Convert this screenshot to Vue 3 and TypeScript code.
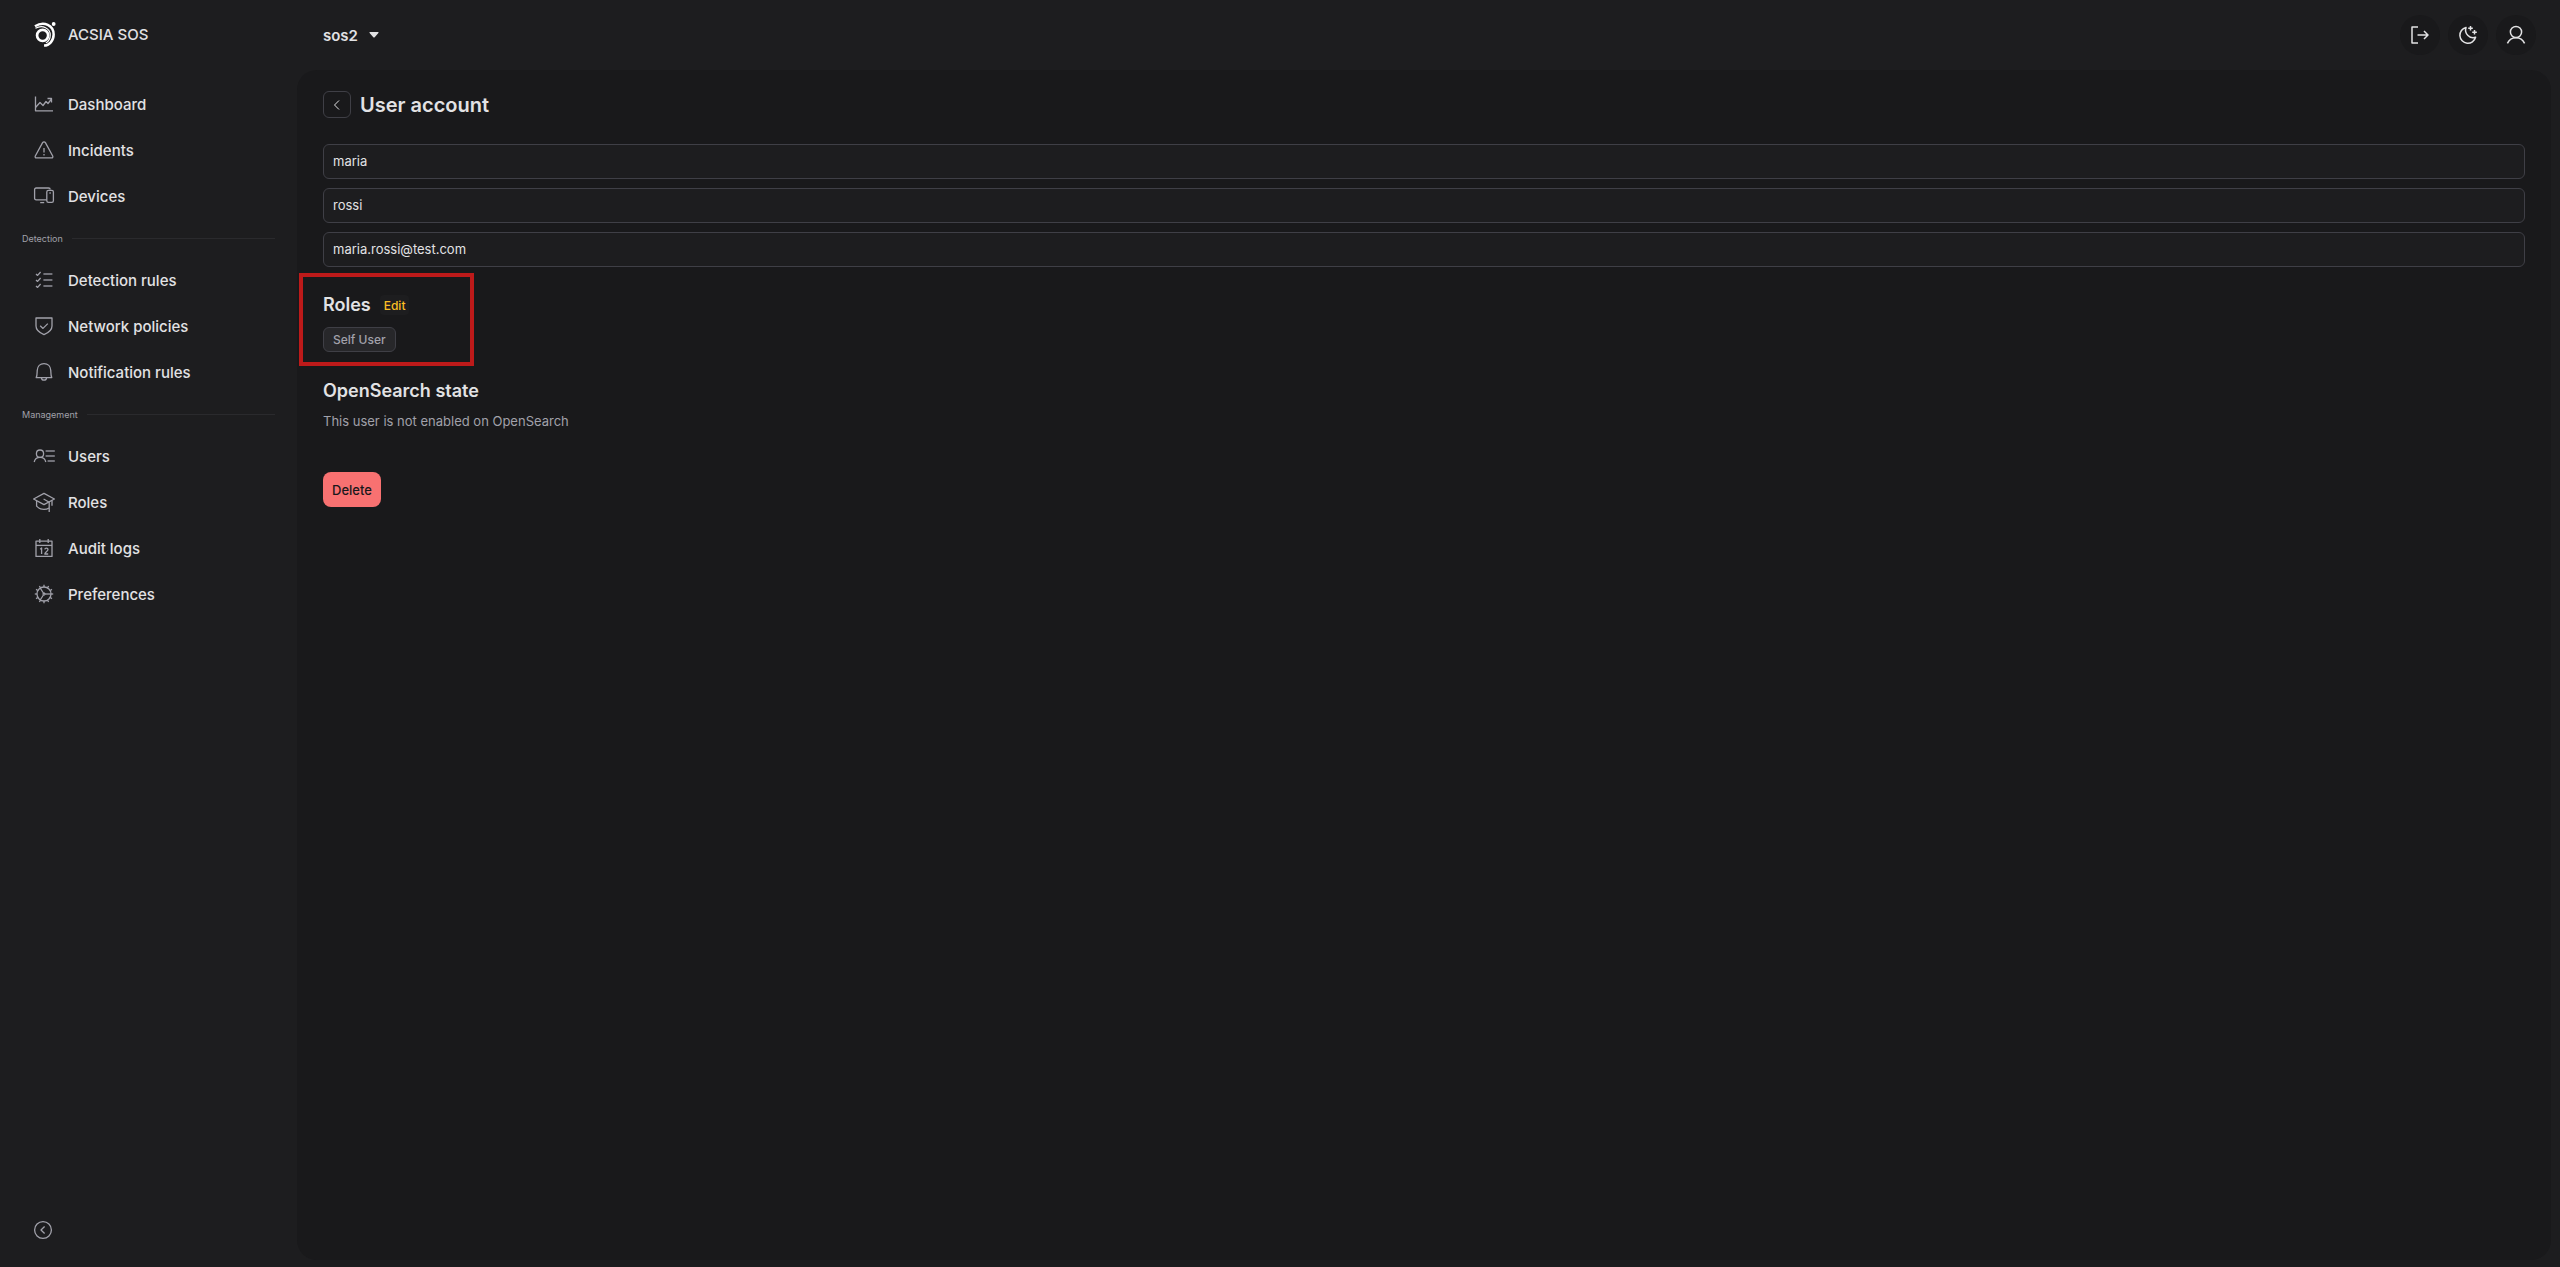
<script setup lang="ts">
import { ref } from 'vue'

type IconName = 'chart' | 'alert' | 'devices' | 'checklist' | 'shield' | 'bell' | 'users' | 'cap' | 'calendar' | 'gear'
interface NavItem { label: string; icon: IconName }
interface NavGroup { title?: string; items: NavItem[] }

const groups: NavGroup[] = [
  {
    items: [
      { label: 'Dashboard', icon: 'chart' },
      { label: 'Incidents', icon: 'alert' },
      { label: 'Devices', icon: 'devices' },
    ],
  },
  {
    title: 'Detection',
    items: [
      { label: 'Detection rules', icon: 'checklist' },
      { label: 'Network policies', icon: 'shield' },
      { label: 'Notification rules', icon: 'bell' },
    ],
  },
  {
    title: 'Management',
    items: [
      { label: 'Users', icon: 'users' },
      { label: 'Roles', icon: 'cap' },
      { label: 'Audit logs', icon: 'calendar' },
      { label: 'Preferences', icon: 'gear' },
    ],
  },
]

const icons: Record<IconName, string[]> = {
  chart: ['M3.500 4.500V18.800H21', 'M3.500 15.500L8 10.500L11 13.500L14 9.500L16 11.500L19.500 7', 'M15.500 6.500H19.500V10.500'],
  alert: ['M12 3.800C12.600 3.800 13.100 4.100 13.400 4.600L20.700 18C21.200 19 20.600 19.900 19.600 19.900H4.400C3.400 19.900 2.800 19 3.300 18L10.600 4.600C10.900 4.100 11.400 3.800 12 3.800Z', 'M12 10V14.500', 'M12 16V17.400'],
  devices: ['M14.6 15.8H4.2Q2.6 15.8 2.6 14.2V5.6Q2.6 4 4.2 4H16.6Q18.2 4 18.2 5.4', 'M8.2 18.6H12.2', 'M16.4 6.4H19.8Q21.4 6.4 21.4 8V16.8Q21.4 18.4 19.8 18.4H16.4Q14.8 18.4 14.8 16.8V8Q14.8 6.4 16.4 6.4Z', 'M17.4 9H18.8'],
  checklist: ['M4 6L5.6 7.4L8.6 4', 'M4 12L5.6 13.4L8.6 10', 'M4 18L5.6 19.4L8.6 16', 'M11.4 6H20.4', 'M11.4 12H20.4', 'M11.4 18H20.4'],
  shield: ['M4 4H20V12C20 16.4 16.2 18.9 12 20.6C7.8 18.9 4 16.4 4 12Z', 'M8.2 11.8L11 14.4L15.8 9.6'],
  bell: ['M4.2 17.6H19.8C18.8 16 18.9 13 18.8 10.6C18.6 6.4 15.8 3.6 12 3.6S5.4 6.4 5.2 10.6C5.1 13 5.2 16 4.2 17.6Z', 'M9.4 17.8C9.6 19.4 10.6 20.2 12 20.2S14.4 19.4 14.6 17.8'],
  users: ['M8 6C10.2 6 11.6 7.6 11.6 9.7S10.2 13.3 8 13.3S4.4 11.8 4.4 9.7S5.8 6 8 6Z', 'M2.2 18C2.8 15 5 13.4 8 13.4S13.2 15 13.8 18', 'M13.6 7H22.8', 'M13.6 12H22.8', 'M15.6 17H22.8'],
  cap: ['M12 3.4L22.4 9L12 14.6L1.6 9Z', 'M4.6 11V16.2C6.4 18.4 9 19.4 12 19.4C14 19.4 15.8 18.8 17 18', 'M11.6 9L17.2 12.2V22', 'M20 10.6V15.8'],
  calendar: ['M4 5.2H20V20.4H4Z', 'M4 9.4H20', 'M7.8 3V7', 'M16.2 3V7', 'M8.2 13.2L9.6 12V18', 'M12.8 13.4C13 11.6 16 11.6 16 13.6C16 15.2 12.8 16.4 12.8 18H16.2'],
  gear: ['M12 5A7 7 0 1 1 12 19A7 7 0 1 1 12 5Z', 'M13 12H19', 'M11.4 11L8.2 6', 'M11.4 13L8.2 18', 'M12 10.8L13 12L12 13.2L11 12Z', 'M12 5V2.8', 'M12 19V21.2', 'M5 12H2.8', 'M19 12H21.2', 'M15.5 5.9L16.6 4', 'M8.5 5.9L7.4 4', 'M15.5 18.1L16.6 20', 'M8.5 18.1L7.4 20', 'M18.1 8.5L20 7.4', 'M18.1 15.5L20 16.6', 'M5.9 8.5L4 7.4', 'M5.9 15.5L4 16.6'],
}

const firstName = ref('maria')
const lastName = ref('rossi')
const email = ref('maria.rossi@test.com')
</script>

<template>
  <div class="shell">
    <aside class="sidebar">
      <a class="brand" href="#">
        <svg class="logo" viewBox="0 0 24 28" fill="none" stroke="currentColor" aria-hidden="true">
          <circle cx="9" cy="15" r="5.800" stroke-width="2.800" />
          <path d="M1 5.400C10.500 -0.500 20.500 4.500 20.500 14C20.500 20.500 16 25.500 10.500 25.600" stroke-width="2.600" />
          <path d="M1.500 7.600C9 3.400 17 7.600 17 14.600C17 18.600 15 21.400 12.400 22.800" stroke-width="1.200" />
          <circle cx="20.500" cy="3" r="2" fill="currentColor" stroke="none" />
        </svg>
        <span>ACSIA SOS</span>
      </a>
      <nav class="nav">
        <template v-for="(group, i) in groups" :key="i">
          <div v-if="group.title" class="divider"><span>{{ group.title }}</span></div>
          <a v-for="item in group.items" :key="item.label" class="nav-item" href="#">
            <svg class="icon" viewBox="0 0 24 24" aria-hidden="true">
              <path v-for="d in icons[item.icon]" :key="d" :d="d" />
            </svg>
            <span>{{ item.label }}</span>
          </a>
        </template>
      </nav>
      <button class="collapse" type="button" aria-label="Collapse sidebar">
        <svg viewBox="0 0 20 20" aria-hidden="true">
          <circle cx="10" cy="10" r="8.400" />
          <path d="M11.600 6.500L8 10L11.600 13.500" />
        </svg>
      </button>
    </aside>

    <div class="content">
      <header class="topbar">
        <button class="tenant" type="button">
          <span>sos2</span>
          <svg viewBox="0 0 10 6" aria-hidden="true"><path d="M1 0H9Q10 0 9.400 1L5.700 5.200Q5 6 4.300 5.200L0.600 1Q0 0 1 0Z" /></svg>
        </button>
        <div class="actions">
          <button class="round" type="button" aria-label="Sign out">
            <svg viewBox="0 0 20 20" aria-hidden="true"><path d="M8 2H2V18H8M7.500 10H18M14 6L18 10L14 14" /></svg>
          </button>
          <button class="round" type="button" aria-label="Switch theme">
            <svg viewBox="0 0 20 20" aria-hidden="true"><path d="M8 2.400A8 8 0 1 0 17.600 12.300C12 14.400 6 8.600 8 2.400ZM12.500 1V5.600M10.200 3.300H14.800M16.500 5V9.600M14.200 7.300H18.800" /></svg>
          </button>
          <button class="round" type="button" aria-label="Account">
            <svg viewBox="0 0 20 20" aria-hidden="true"><circle cx="10" cy="7" r="5.600" /><path d="M1.400 18.400C3 14.800 6 12.700 10 12.700S17 14.800 18.600 18.400" /></svg>
          </button>
        </div>
      </header>

      <main class="panel">
        <div class="title-row">
          <button class="back" type="button" aria-label="Back">
            <svg viewBox="0 0 10 10" aria-hidden="true"><path d="M7 0.500L2.500 5L7 9.500" /></svg>
          </button>
          <h1>User account</h1>
        </div>

        <form class="fields" @submit.prevent>
          <input v-model="firstName" type="text" aria-label="First name" />
          <input v-model="lastName" type="text" aria-label="Last name" />
          <input v-model="email" type="email" aria-label="Email" />
        </form>

        <section class="roles">
          <div class="roles-head">
            <h2>Roles</h2>
            <button class="edit" type="button">Edit</button>
          </div>
          <span class="chip">Self User</span>
        </section>

        <section class="state">
          <h2>OpenSearch state</h2>
          <p>This user is not enabled on OpenSearch</p>
        </section>

        <button class="delete" type="button">Delete</button>
      </main>
    </div>
  </div>
</template>

<style>
body {
  background: #1d1d1f;
}
</style>

<style scoped>
.shell,
.shell * {
  box-sizing: border-box;
}
.shell {
  display: grid;
  grid-template-columns: 297px minmax(0, 1fr);
  min-height: 100vh;
  background: #1d1d1f;
  color: #e2e2e4;
  font-family: Inter, "Liberation Sans", sans-serif;
  font-size: 13px;
}
button {
  padding: 0;
  border: 0;
  background: none;
  color: inherit;
  font: inherit;
  cursor: pointer;
}
a {
  color: inherit;
  text-decoration: none;
}
h1,
h2,
p {
  margin: 0;
}
svg {
  display: block;
  fill: none;
  stroke: currentColor;
  stroke-linejoin: round;
  flex: none;
}
.sidebar {
  display: flex;
  flex-direction: column;
  padding: 0 22px 24px;
}
.brand {
  display: flex;
  align-items: center;
  gap: 11px;
  height: 69px;
  padding-left: 12px;
  font-size: 15px;
  font-weight: 500;
}
.logo {
  width: 23px;
  height: 27px;
  color: #fff;
}
.nav {
  display: flex;
  flex-direction: column;
  padding-top: 12px;
}
.nav-item {
  display: flex;
  align-items: center;
  gap: 12px;
  height: 46px;
  padding-left: 10px;
  font-size: 15px;
  font-weight: 500;
}
.icon {
  width: 24px;
  height: 24px;
  color: #a1a1aa;
  stroke-width: 1.300;
}
.divider {
  display: flex;
  align-items: center;
  gap: 9px;
  height: 38px;
  color: #a1a1aa;
  font-size: 9px;
}
.divider::after {
  content: "";
  flex: 1;
  height: 1px;
  background: #2a2a2d;
}
.collapse {
  width: 20px;
  height: 20px;
  margin: auto 0 3px 11px;
  color: #a1a1aa;
}
.collapse svg {
  stroke-width: 1.300;
}
.content {
  display: flex;
  flex-direction: column;
  padding: 0 9px 7px 0;
}
.topbar {
  display: flex;
  align-items: center;
  justify-content: space-between;
  height: 70px;
  padding: 0 15px 0 26px;
}
.tenant {
  display: flex;
  align-items: center;
  gap: 11px;
  font-size: 15px;
  font-weight: 600;
}
.tenant svg {
  width: 10px;
  height: 6px;
  fill: currentColor;
  stroke: none;
}
.actions {
  display: flex;
  gap: 8px;
}
.round {
  display: grid;
  place-items: center;
  width: 40px;
  height: 40px;
  border-radius: 50%;
  background: #19191b;
}
.round svg {
  width: 20px;
  height: 20px;
  stroke-width: 1.500;
}
.panel {
  display: flex;
  flex-direction: column;
  align-items: flex-start;
  flex: 1;
  padding: 21px 26px;
  border-radius: 20px;
  background: #19191b;
}
.title-row {
  display: flex;
  align-items: flex-start;
  gap: 9px;
}
.back {
  display: grid;
  place-items: center;
  width: 28px;
  height: 27px;
  border: 1px solid #3f3f46;
  border-radius: 6px;
}
.back svg {
  width: 10px;
  height: 10px;
}
h1 {
  font-size: 20px;
  font-weight: 600;
  line-height: 29px;
}
.fields {
  display: flex;
  flex-direction: column;
  gap: 9px;
  width: 100%;
  margin-top: 24px;
}
.fields input {
  width: 100%;
  height: 35px;
  padding: 0 9px 2px;
  border: 1px solid #3f3f46;
  border-radius: 6px;
  outline: 0;
  background: #1d1d1f;
  color: inherit;
  font: inherit;
}
.roles {
  display: flex;
  flex-direction: column;
  align-items: flex-start;
  gap: 10px;
  width: 175px;
  margin: 6px 0 0 -24px;
  padding: 16px 20px 10px;
  border: 4px solid #bd1a1a;
}
.roles-head {
  display: flex;
  align-items: center;
  gap: 9px;
}
h2 {
  font-size: 18px;
  font-weight: 600;
  line-height: 24px;
}
.edit {
  height: 20px;
  padding: 0 4px;
  border-radius: 4px;
  background: #1d1d1f;
  color: #fbbf24;
  font-size: 12px;
  font-weight: 500;
}
.chip {
  padding: 0 9px;
  border: 1px solid #3f3f46;
  border-radius: 6px;
  background: #27272a;
  color: #a1a1aa;
  font-size: 12px;
  font-weight: 500;
  line-height: 23px;
}
.state {
  display: grid;
  gap: 8px;
  margin-top: 13px;
}
.state p {
  color: #a1a1aa;
  line-height: 20px;
}
.delete {
  height: 35px;
  margin-top: 41px;
  padding: 0 9px;
  border-radius: 8px;
  background: #f87171;
  color: #18181b;
  font-weight: 500;
}
</style>
